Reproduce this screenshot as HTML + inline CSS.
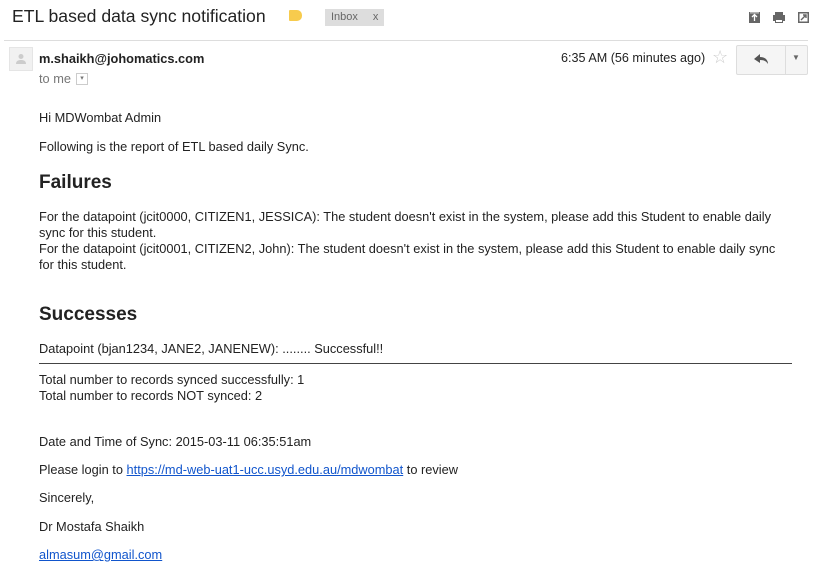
<!DOCTYPE html>
<html><head><style>
body{margin:0;width:819px;height:571px;background:#fff;font-family:"Liberation Sans",Arial,sans-serif;color:#222;position:relative;overflow:hidden}
.a{position:absolute;white-space:nowrap}
p{margin:0}
.t{font-size:12.8px;line-height:16px}
a{color:#15c}
</style></head><body>
<div class="a" style="left:12px;top:6px;font-size:17.6px;color:#222">ETL based data sync notification</div>
<div class="a" style="left:289px;top:10px;width:13px;height:11px;background:#f7cb4d;border-radius:1px 5px 5px 1px"></div>
<div class="a" style="left:325px;top:9px;width:59px;height:17px;background:#ddd;font-size:11px;color:#666;line-height:17px"><span style="margin-left:6px">Inbox</span><span style="margin-left:15px">x</span></div>
<svg class="a" style="left:748px;top:11px" width="64" height="14">
<rect x="1" y="1" width="11" height="11" fill="#666"/><path d="M6.5 10V4M4 6l2.5-2.5L9 6" stroke="#fff" stroke-width="1.3" fill="none"/><rect x="2" y="1.5" width="9" height="0.8" fill="#fff"/>
<rect x="27" y="1" width="8" height="3" fill="#666"/><rect x="25" y="4" width="12" height="6" fill="#666"/><rect x="27" y="8" width="8" height="4" fill="#666"/><rect x="28" y="9" width="6" height="2" fill="#fff"/>
<rect x="50" y="1" width="11" height="11" fill="#666"/><rect x="51.5" y="2.5" width="8" height="8" fill="#fff"/><path d="M53 9l5-5M55 4h3v3" stroke="#666" stroke-width="1.4" fill="none"/>
</svg>
<div class="a" style="left:4px;top:40px;width:804px;height:1px;background:#ddd"></div>
<div class="a" style="left:9px;top:47px;width:22px;height:22px;background:#f1f1f1;border:1px solid #e5e5e5"></div>
<svg class="a" style="left:14px;top:52px" width="14" height="14"><circle cx="7" cy="4.5" r="2.5" fill="#ccc"/><path d="M2 12c0-3 2-4 5-4s5 1 5 4z" fill="#ccc"/></svg>
<div class="a" style="left:39px;top:51px;font-size:12.8px;font-weight:bold">m.shaikh@johomatics.com</div>
<div class="a" style="left:39px;top:71px;font-size:12.8px;color:#777">to me</div>
<div class="a" style="left:76px;top:73px;width:10px;height:10px;border:1px solid #ccc;font-size:7px;color:#777;text-align:center;line-height:10px">▾</div>
<div class="a" style="left:561px;top:51px;font-size:12.6px;color:#222">6:35 AM (56 minutes ago)</div>
<div class="a" style="left:712px;top:47px;font-size:18px;color:#ccc">☆</div>
<div class="a" style="left:736px;top:45px;width:70px;height:28px;border:1px solid #ddd;border-radius:2px;background:#f5f5f5"></div>
<div class="a" style="left:785px;top:46px;width:1px;height:28px;background:#ddd"></div>
<svg class="a" style="left:753px;top:53px" width="16" height="12"><path d="M1 6l6-5v3c5 0 8 3 8 7-2-3-4-4-8-4v3z" fill="#555"/></svg>
<div class="a" style="left:792px;top:53px;font-size:8px;color:#666">▼</div>
<div class="a t" style="left:39px;top:110px">Hi MDWombat Admin</div>
<div class="a t" style="left:39px;top:139px">Following is the report of ETL based daily Sync.</div>
<div class="a" style="left:39px;top:172px;font-size:19px;font-weight:bold">Failures</div>
<div class="a t" style="left:39px;top:209px;width:745px;white-space:normal">For the datapoint (jcit0000, CITIZEN1, JESSICA): The student doesn't exist in the system, please add this Student to enable daily sync for this student.<br>For the datapoint (jcit0001, CITIZEN2, John): The student doesn't exist in the system, please add this Student to enable daily sync for this student.</div>
<div class="a" style="left:39px;top:304px;font-size:19px;font-weight:bold">Successes</div>
<div class="a t" style="left:39px;top:341px">Datapoint (bjan1234, JANE2, JANENEW): ........ Successful!!</div>
<div class="a" style="left:39px;top:363px;width:753px;height:1px;background:#444"></div>
<div class="a t" style="left:39px;top:372px">Total number to records synced successfully: 1<br>Total number to records NOT synced: 2</div>
<div class="a t" style="left:39px;top:434px">Date and Time of Sync: 2015-03-11 06:35:51am</div>
<div class="a t" style="left:39px;top:462px">Please login to <a href="#">https://md-web-uat1-ucc.usyd.edu.au/mdwombat</a> to review</div>
<div class="a t" style="left:39px;top:490px">Sincerely,</div>
<div class="a t" style="left:39px;top:519px">Dr Mostafa Shaikh</div>
<div class="a t" style="left:39px;top:547px"><a href="#">almasum@gmail.com</a></div>
</body></html>
